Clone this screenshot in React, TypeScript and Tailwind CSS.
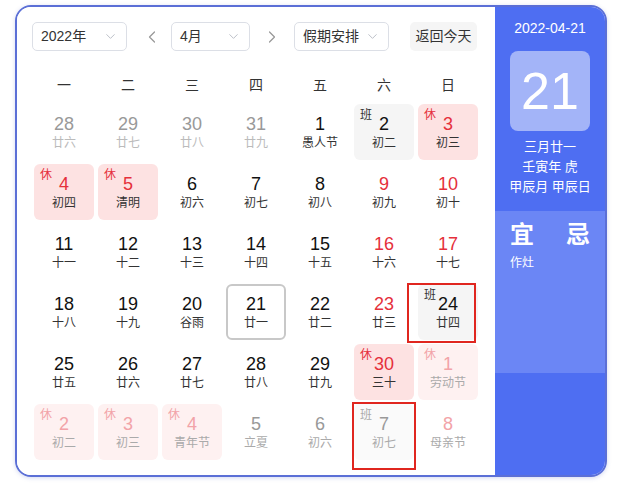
import React from "react";
import { ChevronDown, ChevronLeft, ChevronRight } from "lucide-react";

type Cell = {
  d: number;
  l: string;
  k: "prev" | "cur" | "next";
  red?: boolean;
  tag?: "休" | "班";
  today?: boolean;
};

const rows: Cell[][] = [
  [
    { d: 28, l: "廿六", k: "prev" },
    { d: 29, l: "廿七", k: "prev" },
    { d: 30, l: "廿八", k: "prev" },
    { d: 31, l: "廿九", k: "prev" },
    { d: 1, l: "愚人节", k: "cur" },
    { d: 2, l: "初二", k: "cur", tag: "班" },
    { d: 3, l: "初三", k: "cur", tag: "休", red: true },
  ],
  [
    { d: 4, l: "初四", k: "cur", tag: "休" },
    { d: 5, l: "清明", k: "cur", tag: "休" },
    { d: 6, l: "初六", k: "cur" },
    { d: 7, l: "初七", k: "cur" },
    { d: 8, l: "初八", k: "cur" },
    { d: 9, l: "初九", k: "cur", red: true },
    { d: 10, l: "初十", k: "cur", red: true },
  ],
  [
    { d: 11, l: "十一", k: "cur" },
    { d: 12, l: "十二", k: "cur" },
    { d: 13, l: "十三", k: "cur" },
    { d: 14, l: "十四", k: "cur" },
    { d: 15, l: "十五", k: "cur" },
    { d: 16, l: "十六", k: "cur", red: true },
    { d: 17, l: "十七", k: "cur", red: true },
  ],
  [
    { d: 18, l: "十八", k: "cur" },
    { d: 19, l: "十九", k: "cur" },
    { d: 20, l: "谷雨", k: "cur" },
    { d: 21, l: "廿一", k: "cur", today: true },
    { d: 22, l: "廿二", k: "cur" },
    { d: 23, l: "廿三", k: "cur", red: true },
    { d: 24, l: "廿四", k: "cur", tag: "班" },
  ],
  [
    { d: 25, l: "廿五", k: "cur" },
    { d: 26, l: "廿六", k: "cur" },
    { d: 27, l: "廿七", k: "cur" },
    { d: 28, l: "廿八", k: "cur" },
    { d: 29, l: "廿九", k: "cur" },
    { d: 30, l: "三十", k: "cur", tag: "休" },
    { d: 1, l: "劳动节", k: "next", tag: "休" },
  ],
  [
    { d: 2, l: "初二", k: "next", tag: "休" },
    { d: 3, l: "初三", k: "next", tag: "休" },
    { d: 4, l: "青年节", k: "next", tag: "休" },
    { d: 5, l: "立夏", k: "next" },
    { d: 6, l: "初六", k: "next" },
    { d: 7, l: "初七", k: "next", tag: "班" },
    { d: 8, l: "母亲节", k: "next", red: true },
  ],
];

function DayCell({ c }: { c: Cell }) {
  const isRest = c.tag === "休";
  const isWork = c.tag === "班";
  let bg = "";
  if (isRest) bg = c.k === "cur" ? "bg-[#fde2e2]" : "bg-[#fef1f1]";
  if (isWork) bg = c.k === "cur" ? "bg-[#f5f5f5]" : "bg-[#fafafa]";

  let num = "text-[#111]";
  let lunar = "text-[#333]";
  let tagColor = "";
  if (c.k === "cur") {
    if (isRest || c.red) num = "text-[#e5303b]";
    tagColor = isRest ? "text-[#e5303b]" : "text-[#333]";
  } else if (c.k === "prev") {
    num = "text-[#999]";
    lunar = "text-[#bbb]";
  } else {
    num = isRest || c.red ? "text-[#f2a3a8]" : "text-[#999]";
    lunar = "text-[#aaa]";
    tagColor = isRest ? "text-[#f2a3a8]" : "text-[#aaa]";
  }

  return (
    <div className="p-[2px] h-[60px]">
      <div
        className={`relative h-full rounded-[6px] flex flex-col items-center justify-center ${bg} ${
          c.today ? "border-2 border-[#c8c8c8] rounded-[5px]" : ""
        }`}
      >
        {c.tag && (
          <span className={`absolute top-[3px] left-[6px] text-[12px] leading-4 ${tagColor}`}>
            {c.tag}
          </span>
        )}
        <span className={`text-[18px] leading-[20px] ${num}`}>{c.d}</span>
        <span className={`text-[12px] leading-[16px] mt-[1px] ${lunar}`}>{c.l}</span>
      </div>
    </div>
  );
}

function Select({ label, w }: { label: string; w: string }) {
  return (
    <div
      className={`${w} h-[29px] border border-[#dcdfe6] rounded-[5px] flex items-center justify-between pl-[8px] pr-[8px] text-[14px] text-[#333]`}
    >
      <span>{label}</span>
      <ChevronDown size={15} strokeWidth={1.5} className="text-[#b8bcc4]" />
    </div>
  );
}

export default function App() {
  const weekdays = ["一", "二", "三", "四", "五", "六", "日"];
  return (
    <div className="relative w-[619px] h-[484px] bg-white pt-[5px] pl-[15px] font-['Liberation_Sans','Noto_Sans_CJK_SC',sans-serif]">
      <div className="w-[592px] h-[472px] border-2 border-[#5b6fd6] rounded-[16px] overflow-hidden flex shadow-[0_1px_4px_rgba(80,100,200,0.25)]">
        {/* Left calendar */}
        <div className="w-[478px] h-full bg-white px-[15px] pt-[15px]">
          <div className="flex items-center h-[29px]">
            <Select label="2022年" w="w-[95px]" />
            <div className="w-[44px] flex justify-center pl-[6px] text-[#999]">
              <ChevronLeft size={20} strokeWidth={1.5} />
            </div>
            <Select label="4月" w="w-[79px]" />
            <div className="w-[44px] flex justify-center text-[#999]">
              <ChevronRight size={20} strokeWidth={1.5} />
            </div>
            <Select label="假期安排" w="w-[95px]" />
            <div className="ml-[21px] w-[67px] h-[29px] rounded-[5px] bg-[#f5f5f5] flex items-center justify-center text-[14px] text-[#333]">
              返回今天
            </div>
          </div>
          <div className="mt-[13px] h-[38px] grid grid-cols-7 items-center pt-[4px]">
            {weekdays.map((w) => (
              <div key={w} className="text-center text-[14px] text-[#333]">
                {w}
              </div>
            ))}
          </div>
          <div className="grid grid-cols-7">
            {rows.flat().map((c, i) => (
              <DayCell key={i} c={c} />
            ))}
          </div>
        </div>
        {/* Right panel */}
        <div className="flex-1 h-full bg-[#4e6ef2] flex flex-col text-white">
          <div className="h-[204px] flex flex-col items-center">
            <div className="mt-[11px] text-[14px] leading-[20px]">2022-04-21</div>
            <div className="mt-[13px] w-[80px] h-[80px] rounded-[8px] bg-[#a3b4f8] flex items-center justify-center text-[52px] leading-none">
              21
            </div>
            <div className="mt-[6px] text-[13px] leading-[20px]">三月廿一</div>
            <div className="text-[13px] leading-[20px]">壬寅年 虎</div>
            <div className="text-[13px] leading-[20px]">甲辰月 甲辰日</div>
          </div>
          <div className="h-[162px] bg-[#6b86f5] px-[15px] pt-[10px]">
            <div className="flex justify-between text-[24px] font-bold leading-[28px]">
              <span>宜</span>
              <span>忌</span>
            </div>
            <div className="mt-[6px] text-[12px] leading-[16px]">作灶</div>
          </div>
          <div className="flex-1" />
        </div>
      </div>
      {/* annotation boxes */}
      <div className="absolute left-[407px] top-[283px] w-[69px] h-[60px] border-2 border-[#e0261f]" />
      <div className="absolute left-[352px] top-[402px] w-[64px] h-[68px] border-2 border-[#e0261f]" />
    </div>
  );
}
